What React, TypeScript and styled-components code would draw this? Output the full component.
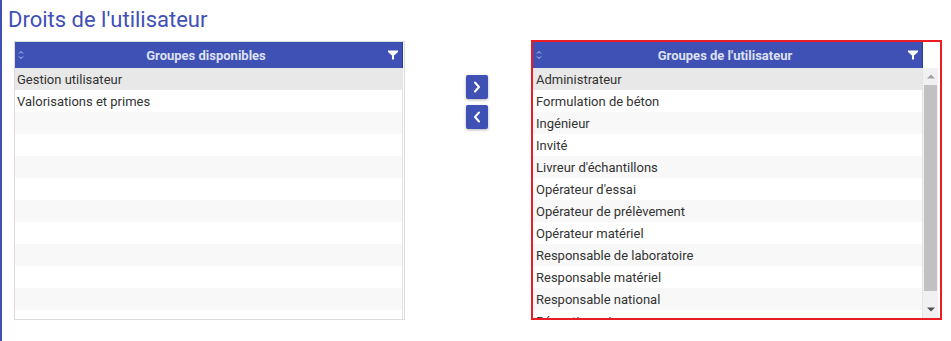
import styled, { createGlobalStyle } from 'styled-components'

const GlobalStyle = createGlobalStyle`
  html, body {
    margin: 0;
    background: #fff;
  }
  body {
    font-family: Roboto, 'Liberation Sans', sans-serif;
  }
`

const Page = styled('div')`
  box-sizing: border-box;
  height: 341px;
  border-left: 2px solid #3f51b5;
  padding-left: 6px;
`

const Title = styled('h1')`
  margin: 0;
  padding-top: 7px;
  font-size: 22px;
  line-height: 26px;
  font-weight: 400;
  color: #3f51b5;
`

const Columns = styled('div')`
  display: flex;
  align-items: flex-start;
  margin: 7px 0 0 6px;
`

const Panel = styled('div')<{ $invalid?: boolean }>`
  box-sizing: border-box;
  display: flex;
  flex-direction: column;
  overflow: hidden;
  background: #fff;
  width: ${({ $invalid }) => ($invalid ? '411px' : '391px')};
  height: ${({ $invalid }) => ($invalid ? '280px' : '279px')};
  margin-top: ${({ $invalid }) => ($invalid ? '0' : '1px')};
  border: ${({ $invalid }) => ($invalid ? '2px solid #ec1c24' : '1px solid #dcdcdc')};
`

const HeaderRow = styled('div')`
  display: flex;
  height: 26px;
  flex-shrink: 0;
`

const HeaderCell = styled('div')`
  flex: 1;
  display: flex;
  align-items: center;
  padding: 0 4px 0 3px;
  background: #3f51b5;
  border-right: 1px solid #2a3a9a;
  color: #dde1f3;
  font-size: 13px;
  font-weight: 700;
`

const HeaderTitle = styled('span')`
  flex: 1;
  text-align: center;
`

const Gutter = styled('div')<{ $wide?: boolean }>`
  width: ${({ $wide }) => ($wide ? '17px' : '1px')};
  background: #fff;
  flex-shrink: 0;
`

const Body = styled('div')`
  flex: 1;
  display: flex;
  min-height: 0;
`

const List = styled('div')`
  flex: 1;
  overflow: hidden;
  border-right: 1px solid #e4e4e4;
`

const Row = styled('div')<{ $index: number; $indent: number }>`
  height: 22px;
  line-height: 24px;
  padding-left: ${({ $indent }) => $indent}px;
  font-size: 13px;
  color: #333;
  white-space: nowrap;
  overflow: hidden;
  background: ${({ $index }) => ($index === 0 ? '#e8e8e8' : $index % 2 === 0 ? '#f8f8f8' : '#fff')};
`

const ScrollColumn = styled('div')`
  width: 17px;
  flex-shrink: 0;
  display: flex;
  background: #fff;
`

const Scrollbar = styled('div')`
  width: 15px;
  display: flex;
  flex-direction: column;
  background: #f1f1f1;
`

const ScrollButton = styled('div')`
  height: 17px;
  display: flex;
  align-items: center;
  justify-content: center;
  flex-shrink: 0;
`

const Track = styled('div')`
  flex: 1;
  padding: 0 1px;
`

const Thumb = styled('div')`
  height: 206px;
  background: #c1c1c1;
`

const Middle = styled('div')`
  width: 126px;
  flex-shrink: 0;
  display: flex;
  flex-direction: column;
  gap: 6px;
  padding: 35px 0 0 61px;
  box-sizing: border-box;
`

const MoveButton = styled('button')`
  width: 22px;
  height: 24px;
  padding: 0;
  border: none;
  border-radius: 2px;
  background: #3f51b5;
  box-shadow: 0 1px 3px rgba(0, 0, 0, 0.3);
  display: flex;
  align-items: center;
  justify-content: center;
  cursor: pointer;
`

function SortIcon() {
  return (
    <svg width='6' height='10' viewBox='0 0 6 10'>
      <path d='M1 3.5 L3 1.5 L5 3.5 M1 6.5 L3 8.5 L5 6.5' fill='none' stroke='#c5cbe9' strokeWidth='1' />
    </svg>
  )
}

function FilterIcon() {
  return (
    <svg width='10' height='10' viewBox='0 0 10 10'>
      <path d='M0 0.5 H10 V2 L6 5.5 V9.5 H4 V5.5 L0 2 Z' fill='#fff' />
    </svg>
  )
}

function Chevron({ direction }: { direction: 'left' | 'right' }) {
  const d = direction === 'right' ? 'M2 1.5 L6 6 L2 10.5' : 'M6 1.5 L2 6 L6 10.5'
  return (
    <svg width='8' height='12' viewBox='0 0 8 12'>
      <path d={d} fill='none' stroke='#fff' strokeWidth='2' strokeLinecap='round' strokeLinejoin='round' />
    </svg>
  )
}

interface GroupListProps {
  title: string
  items: string[]
  rowCount: number
  invalid?: boolean
}

function GroupList({ title, items, rowCount, invalid }: GroupListProps) {
  const rows = Array.from({ length: Math.max(rowCount, items.length) }, (_, i) => items[i] ?? '')

  return (
    <Panel $invalid={invalid}>
      <HeaderRow>
        <HeaderCell>
          <SortIcon />
          <HeaderTitle>{title}</HeaderTitle>
          <FilterIcon />
        </HeaderCell>
        <Gutter $wide={invalid} />
      </HeaderRow>

      <Body>
        <List>
          {rows.map((item, i) => (
            <Row key={i} $index={i} $indent={invalid ? 3 : 2}>
              {item}
            </Row>
          ))}
        </List>

        {invalid ? (
          <ScrollColumn>
            <Scrollbar>
              <ScrollButton>
                <svg width='8' height='5' viewBox='0 0 8 5'>
                  <path d='M0 4.5 L4 0.5 L8 4.5 Z' fill='#a3a3a3' />
                </svg>
              </ScrollButton>
              <Track>
                <Thumb />
              </Track>
              <ScrollButton>
                <svg width='8' height='5' viewBox='0 0 8 5'>
                  <path d='M0 0.5 L4 4.5 L8 0.5 Z' fill='#505050' />
                </svg>
              </ScrollButton>
            </Scrollbar>
          </ScrollColumn>
        ) : (
          <Gutter />
        )}
      </Body>
    </Panel>
  )
}

const available = ['Gestion utilisateur', 'Valorisations et primes']

const assigned = [
  'Administrateur',
  'Formulation de béton',
  'Ingénieur',
  'Invité',
  "Livreur d'échantillons",
  "Opérateur d'essai",
  'Opérateur de prélèvement',
  'Opérateur matériel',
  'Responsable de laboratoire',
  'Responsable matériel',
  'Responsable national',
  'Réceptionnaire',
  'Technicien',
]

export default function App() {
  return (
    <Page>
      <GlobalStyle />
      <Title>Droits de l'utilisateur</Title>

      <Columns>
        <GroupList title='Groupes disponibles' items={available} rowCount={12} />

        <Middle>
          <MoveButton>
            <Chevron direction='right' />
          </MoveButton>
          <MoveButton>
            <Chevron direction='left' />
          </MoveButton>
        </Middle>

        <GroupList title="Groupes de l'utilisateur" items={assigned} rowCount={12} invalid />
      </Columns>
    </Page>
  )
}
